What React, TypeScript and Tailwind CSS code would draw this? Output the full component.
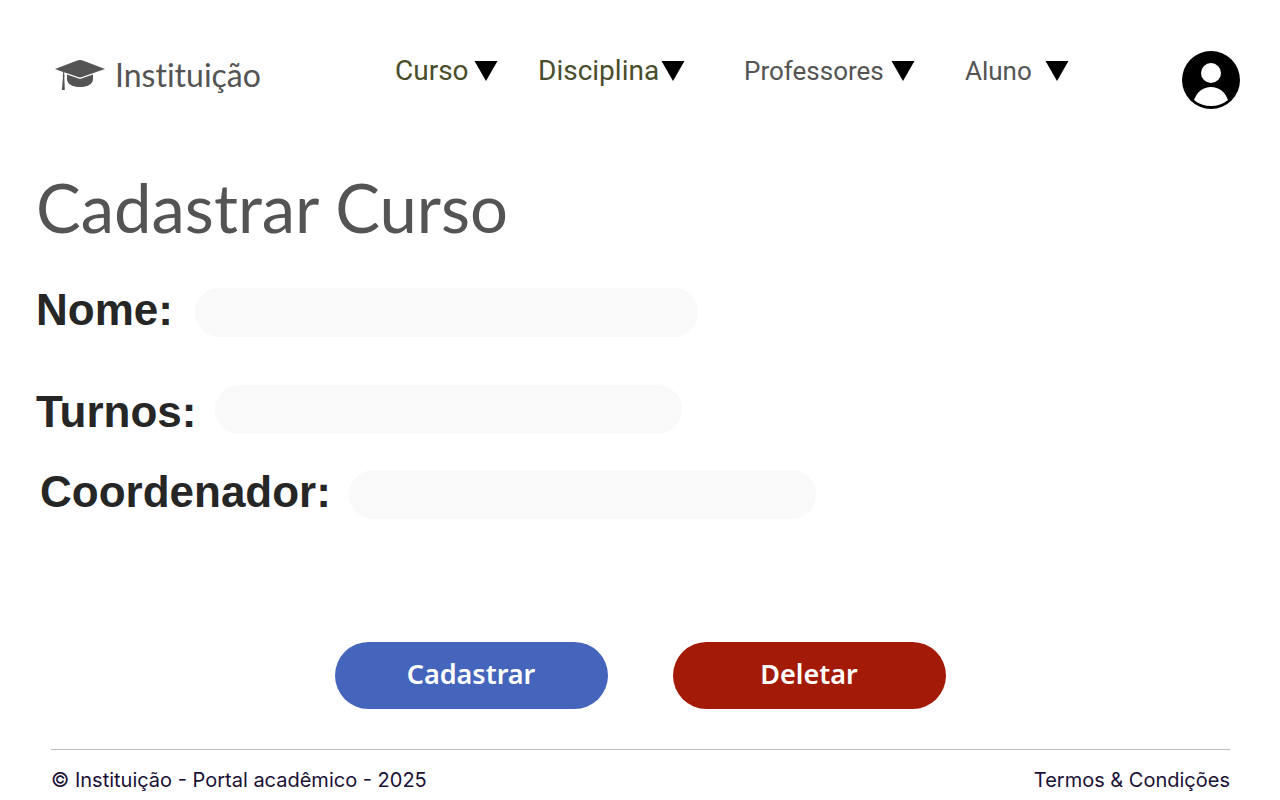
import type { ReactNode } from "react";

function GraduationCap() {
  return (
    <svg viewBox="0 0 50 32" className="h-8 w-[50px] shrink-0 fill-[#545454]" aria-hidden="true">
      <path d="M25 1Q27 1 29 2L50 10L27 18Q25 18.800 23 18L9.300 13.300L9.200 15.500Q10 16.500 9.300 18L9.800 31H6.800L8 18Q7.200 16.500 8.100 15.500V12.900L0 10L21 2Q23 1 25 1Z" />
      <path d="M12 15.500L25 20L38 15.500V20C38 25.500 32 28 25 28C18 28 12 25.500 12 20Z" />
    </svg>
  );
}

function Avatar() {
  return (
    <svg viewBox="0 0 58 58" className="size-[58px]" aria-hidden="true">
      <circle cx="29" cy="29" r="29" fill="#000" />
      <circle cx="29" cy="22" r="10" fill="#fff" />
      <path d="M12 49C15 41 21 36 29 36C37 36 43 41 46 49C41 53 35.500 55 29 55C22.500 55 17 53 12 49Z" fill="#fff" />
    </svg>
  );
}

function NavItem({ className, children }: { className: string; children: ReactNode }) {
  return (
    <button type="button" className={`flex items-center justify-between leading-8 ${className}`}>
      {children}
      <svg viewBox="0 0 24 20" className="h-5 w-6 shrink-0" aria-hidden="true">
        <path d="M0.500 0H23.500L12 20Z" fill="#000" />
      </svg>
    </button>
  );
}

function Field({ id, label, className, inputClass }: { id: string; label: string; className: string; inputClass: string }) {
  return (
    <div className={`flex ${className}`}>
      <label
        htmlFor={id}
        className="shrink-0 font-['Liberation_Sans',sans-serif] text-[44px] leading-11 font-bold text-[#262626]"
      >
        {label}
      </label>
      <input
        id={id}
        name={id}
        type="text"
        className={`h-[49px] min-w-0 rounded-full bg-[#f9f9f9] px-6 text-xl text-[#262626] ${inputClass}`}
      />
    </div>
  );
}

export default function App() {
  return (
    <div className="flex min-h-screen flex-col bg-white font-['Lato',sans-serif]">
      <header className="flex items-start pt-[51px] pr-10 pl-[55px]">
        <a href="#" className="flex w-[340px] items-center gap-2.5 pt-2 text-[#545454]">
          <GraduationCap />
          <span className="text-[32px] leading-8 [font-variant-ligatures:none]">Instituição</span>
        </a>
        <nav className="flex pt-1 font-['Roboto',sans-serif]">
          <NavItem className="w-[103px] text-[28px] text-[#4a4d2b]">Curso</NavItem>
          <NavItem className="ml-10 w-[147px] text-[28px] text-[#4a4d2b]">Disciplina</NavItem>
          <NavItem className="ml-[59px] w-[171px] text-[26px] text-[#545454]">Professores</NavItem>
          <NavItem className="ml-[50px] w-[104px] text-[26px] text-[#545454]">Aluno</NavItem>
        </nav>
        <button type="button" aria-label="Perfil" className="ml-auto shrink-0">
          <Avatar />
        </button>
      </header>

      <main className="flex grow flex-col pt-[58px]">
        <h1 className="pl-9 text-[67px] leading-20 text-[#545454]">Cadastrar Curso</h1>
        <form>
          <Field id="nome" label="Nome:" className="mt-[41px] items-start pl-9" inputClass="ml-[22px] w-[503px]" />
          <Field id="turnos" label="Turnos:" className="mt-12 items-end pl-9" inputClass="ml-[18px] w-[467px]" />
          <Field id="coordenador" label="Coordenador:" className="mt-9 items-start pl-10" inputClass="ml-[18px] w-[467px]" />
          <div className="mt-[123px] flex justify-center gap-[65px] font-['Noto_Sans',sans-serif] text-[27px] font-semibold text-white">
            <button type="submit" className="h-[67px] w-[273px] rounded-full bg-[#4565bd] pb-0.5">
              Cadastrar
            </button>
            <button type="button" className="h-[67px] w-[273px] rounded-full bg-[#a31b07] pb-0.5">
              Deletar
            </button>
          </div>
        </form>
      </main>

      <footer className="mr-[50px] ml-[51px] flex justify-between border-t border-[#bdbbc4] pt-4 pb-1.5 font-['Inter',sans-serif] text-[20px] leading-7 text-[#1b1036]">
        <p>© Instituição - Portal acadêmico - 2025</p>
        <a href="#">Termos &amp; Condições</a>
      </footer>
    </div>
  );
}
